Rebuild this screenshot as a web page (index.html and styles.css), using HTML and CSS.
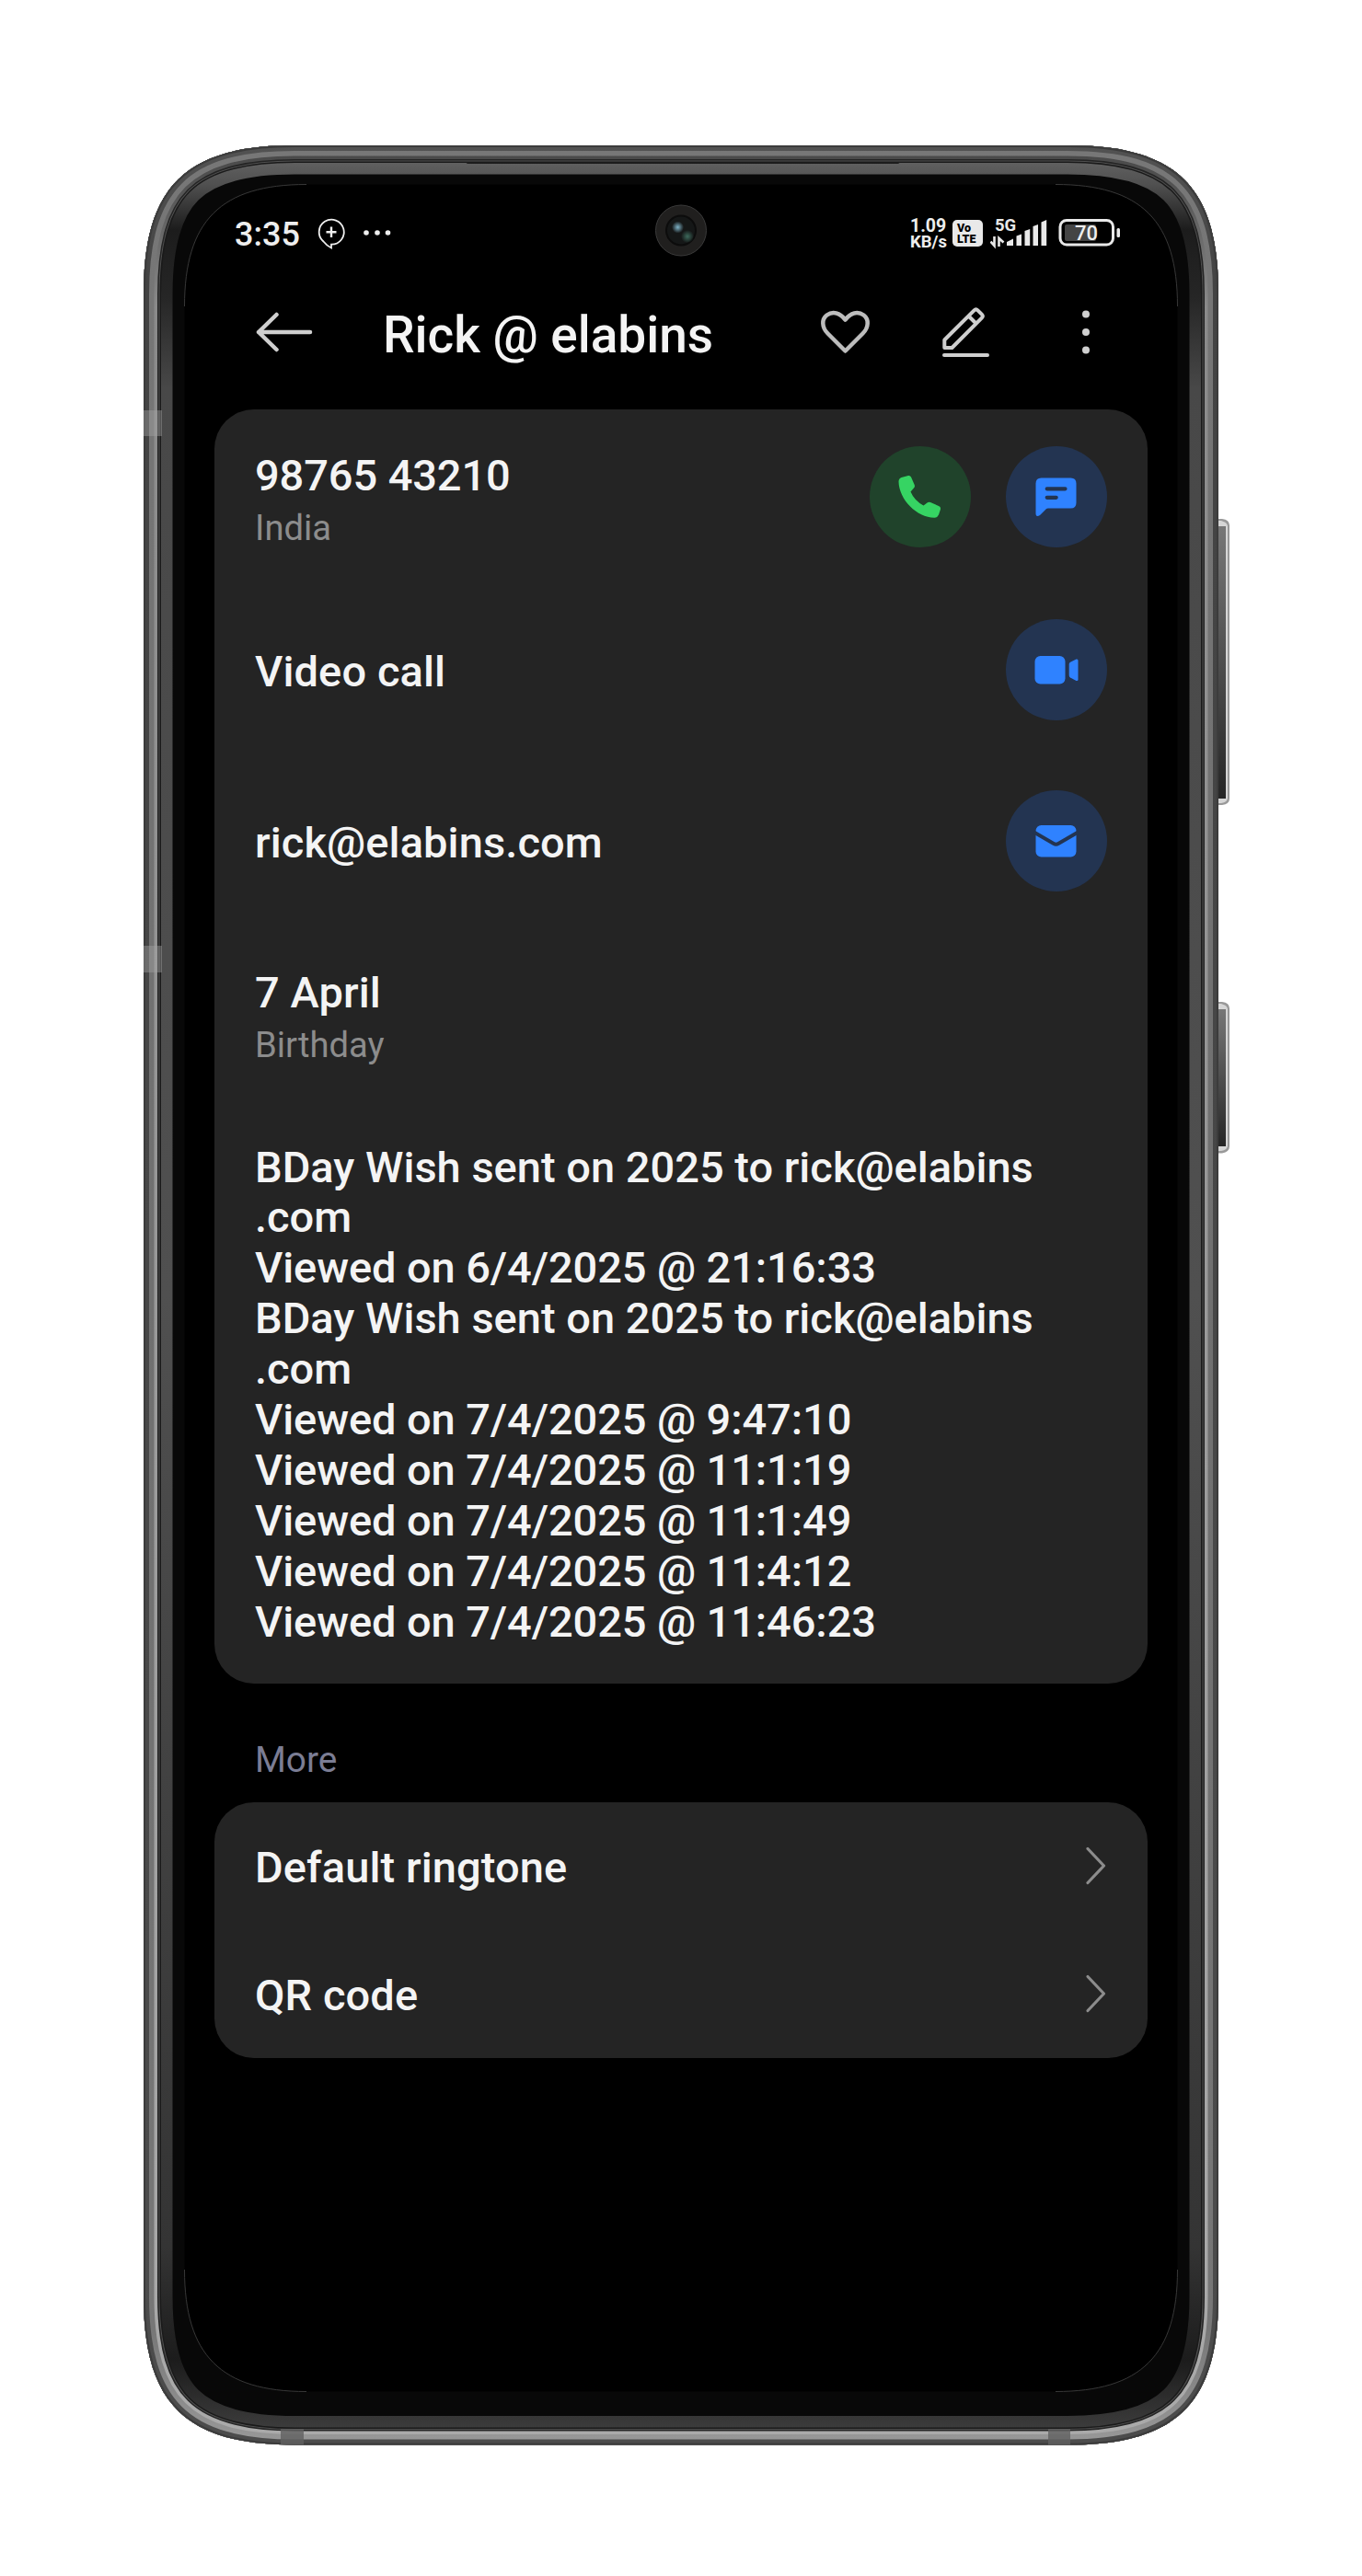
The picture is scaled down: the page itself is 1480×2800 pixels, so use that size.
FILE: index.html
```html
<!DOCTYPE html>
<html lang="en">
<head>
<meta charset="utf-8">
<title>Contact details</title>
<link rel="stylesheet" href="styles.css">
</head>
<body>
<main class="stage">
<div class="phone">
  <svg class="frame" viewBox="156 158 1180 2500" width="1180" height="2500" aria-hidden="true">
    <defs>
      <path id="body" d="M320 158H1160C1279 158 1324 203 1324 320V2496C1324 2612 1279 2657.500 1160 2657.500H320C201 2657.500 156 2612 156 2496V320C156 203 201 158 320 158Z"/>
      <clipPath id="clip"><use href="#body"/></clipPath>
      <linearGradient id="edge" x1="0" y1="158" x2="0" y2="2658" gradientUnits="userSpaceOnUse"><stop offset="0" stop-color="#525252"/><stop offset=".06" stop-color="#434343"/><stop offset="1" stop-color="#4c4c4c"/></linearGradient>
      <linearGradient id="mid" x1="0" y1="158" x2="0" y2="2658" gradientUnits="userSpaceOnUse"><stop offset="0" stop-color="#777"/><stop offset=".5" stop-color="#707070"/><stop offset=".95" stop-color="#777"/><stop offset="1" stop-color="#999"/></linearGradient>
      <linearGradient id="shine" x1="0" y1="158" x2="0" y2="2658" gradientUnits="userSpaceOnUse"><stop offset="0" stop-color="#464646"/><stop offset=".02" stop-color="#555"/><stop offset=".07" stop-color="#8a8a8a"/><stop offset="1" stop-color="#aaa"/></linearGradient>
      <linearGradient id="rim" x1="0" y1="176" x2="0" y2="2640" gradientUnits="userSpaceOnUse"><stop offset="0" stop-color="#606060"/><stop offset=".01" stop-color="#505050"/><stop offset=".03" stop-color="#1c1c1c"/><stop offset=".06" stop-color="#262626"/><stop offset=".1" stop-color="#484848"/><stop offset=".5" stop-color="#505050"/><stop offset=".92" stop-color="#343434"/><stop offset=".97" stop-color="#1c1c1c"/><stop offset="1" stop-color="#3c3c3c"/></linearGradient>
      <linearGradient id="key" x1="0" y1="0" x2="0" y2="1"><stop offset="0" stop-color="#777"/><stop offset="1" stop-color="#262626"/></linearGradient>
      <radialGradient id="hi"><stop offset="0" stop-color="#7fb4c8"/><stop offset="1" stop-color="#7fb4c8" stop-opacity="0"/></radialGradient>
      <radialGradient id="lo"><stop offset="0" stop-color="#3d6a5c"/><stop offset="1" stop-color="#3d6a5c" stop-opacity="0"/></radialGradient>
    </defs>
    <g>
      <path d="M1322 564H1328Q1336 565 1336 571V868Q1336 874 1328 875H1322Z" fill="#999"/>
      <path d="M1322 566H1327Q1334 568 1334 572V867Q1334 872 1327 873H1322Z" fill="#d6d6d6"/>
      <rect x="1322" y="572" width="10" height="296" fill="url(#key)"/>
      <path d="M1322 1089H1328Q1336 1090 1336 1096V1246Q1336 1252 1328 1253.500H1322Z" fill="#999"/>
      <path d="M1322 1091H1327Q1334 1093 1334 1097V1245Q1334 1250 1327 1251H1322Z" fill="#d6d6d6"/>
      <rect x="1322" y="1097" width="10" height="149" fill="url(#key)"/>
    </g>
    <g clip-path="url(#clip)" fill="none">
      <use href="#body" fill="#080808"/>
      <use href="#body" stroke="url(#rim)" stroke-width="63"/>
      <use href="#body" stroke="#1a1a1a" stroke-width="38"/>
      <use href="#body" stroke="#505050" stroke-width="35"/>
      <use href="#body" stroke="#242424" stroke-width="33"/>
      <use href="#body" stroke="url(#shine)" stroke-width="30"/>
      <use href="#body" stroke="url(#mid)" stroke-width="23"/>
      <use href="#body" stroke="url(#edge)" stroke-width="12"/>
      <use href="#body" stroke="#3c3c3c" stroke-width="4"/>
      <path d="M505 176H979L976 178H508Z" fill="#1c1c1c"/>
      <path d="M156 446H176V474H156ZM156 1028H176V1057H156Z" fill="#a8a8a8" opacity=".4"/>
      <path d="M305 2640H330V2658H305ZM1139 2640H1163V2658H1139Z" fill="#606060" opacity=".8"/>
    </g>
    <path d="M333 200.500H1147C1240 200.500 1279.500 240 1279.500 333V2467C1279.500 2560 1240 2599.500 1147 2599.500H333C240 2599.500 200.500 2560 200.500 2467V333C200.500 240 240 200.500 333 200.500Z" fill="#000"/>
    <g fill="none" stroke="#383838" stroke-width="1">
      <path d="M200.500 333C200.500 240 240 200.500 333 200.500M1147 200.500C1240 200.500 1279.500 240 1279.500 333M1279.500 2467C1279.500 2560 1240 2599.500 1147 2599.500M333 2599.500C240 2599.500 200.500 2560 200.500 2467"/>
    </g>
    <circle cx="740" cy="250.500" r="27.500" fill="#201f1e" stroke="#3a3a3a"/>
    <circle cx="740" cy="250.500" r="16" fill="#151717" stroke="#0c0c0c" stroke-width="2"/>
    <circle cx="747" cy="257" r="7" fill="url(#lo)"/>
    <circle cx="736.500" cy="247" r="6.500" fill="url(#hi)"/>
  </svg>

  <div class="screen">
    <header class="status">
      <span class="clock">3:35</span>
      <svg class="chat" width="30" height="34" viewBox="0 0 30 34"><path d="M15 32.500V28.700A13.500 13.500 0 1 0 6.500 25.500Q10.500 30.500 15 32.500Z" fill="none" stroke="#eee" stroke-width="1.800"/><path d="M15 9.500V21M9.500 15.200H20.500" stroke="#eee" stroke-width="2.400"/></svg>
      <svg class="dots" width="30" height="6" viewBox="0 0 30 6" fill="#eee"><circle cx="3" cy="3" r="2.800"/><circle cx="15" cy="3" r="2.800"/><circle cx="26.500" cy="3" r="2.800"/></svg>
      <span class="gap"></span>
      <span class="speed"><span class="rate">1.09</span><br>KB/s</span>
      <span class="volte">Vo<br>LTE</span>
      <svg class="signal" width="62" height="40" viewBox="1076 233 62 40" fill="#e9e9e9"><text class="net" x="1081" y="250.500">5G</text><path d="M1080.500 257V267L1076.500 262.500M1085.500 268V259L1090.500 263.500" fill="none" stroke="#e9e9e9" stroke-width="2.600"/><path d="M1094 267V263L1101 259.500V267ZM1104.500 267V256.500L1110 254.500V267ZM1113.500 267V251L1119.200 249V267ZM1122.500 267V246L1128 244V267ZM1131.500 267V241.500L1137.200 239V267Z"/></svg>
      <svg class="battery" width="68" height="30" viewBox="1150 238 68 30"><rect x="1152" y="239.500" width="57.500" height="26.500" rx="7" fill="none" stroke="#e9e9e9" stroke-width="3"/><rect x="1157" y="244" width="34" height="18" rx="2" fill="#444"/><rect x="1213.500" y="248" width="3.500" height="10" rx="1.500" fill="#e9e9e9"/><text class="level" x="1168" y="261.300">70</text></svg>
    </header>

    <nav class="appbar">
      <svg class="back" width="62" height="46" viewBox="278 337.500 62 46" fill="none" stroke="#cfcfcf" stroke-width="4.500" stroke-linecap="round" stroke-linejoin="round"><path d="M337 360.500H281M300.500 341.500L281 360.500L300.500 379.500"/></svg>
      <h1 class="title">Rick @ elabins</h1>
      <svg class="heart" width="56" height="50" viewBox="890 336 56 50" fill="none" stroke="#bdbdbd" stroke-width="4.500" stroke-linejoin="round"><path d="M918.500 381.500L899.500 362.500C893 356 892.500 347 898.500 342.500C905 338 912.500 340 918.500 347.500C924.500 340 932 338 938.500 342.500C944.500 347 944 356 937.500 362.500Z"/></svg>
      <svg class="pencil" width="54" height="58" viewBox="1023 331 54 58" fill="none" stroke="#cfcfcf" stroke-width="4" stroke-linejoin="round"><path d="M1026.300 377V368.500L1058.500 336.300Q1060.500 334.300 1062.500 336.300L1066.800 340.600Q1068.800 342.600 1066.800 344.600L1034.500 377ZM1052.500 342.500L1060.500 350.500"/><path d="M1026 385H1073" stroke-linecap="round"/></svg>
      <svg class="more-icon" width="10" height="50" viewBox="0 0 10 50" fill="#d0d0d0"><circle cx="5" cy="5.500" r="4"/><circle cx="5" cy="25" r="4"/><circle cx="5" cy="44.500" r="4"/></svg>
    </nav>

    <section class="card details">
      <div class="row phone-row">
        <div class="copy"><div class="primary number">98765 43210</div><div class="secondary">India</div></div>
        <div class="actions">
          <span class="action call"><svg width="110" height="110" viewBox="945 485 110 110"><path d="M979.500 519L987 517Q989 516.500 990 518.500L993.700 527Q994.500 529 993 530.500L989.500 534.500Q993.500 544 1003.500 549.500L1007.500 546.500Q1009 545.200 1011 546L1020 550Q1022.500 551 1022 553.500L1020 559.500Q1018.800 562.500 1015.500 562.700C996 562.500 977 543 976.500 523.500Q976.500 520 979.500 519Z" fill="#36d463"/></svg></span>
          <span class="action"><svg width="110" height="110" viewBox="1092.500 485 110 110"><path d="M1131 519.500H1163Q1169 519.500 1169 525.500V546.500Q1169 552.500 1163 552.500H1138.500Q1137 552.500 1136 553.500L1129.500 560Q1125 562.500 1125 558V525.500Q1125 519.500 1131 519.500Z" fill="#2f82ff"/><path d="M1137.200 531.300H1157M1137.200 540.800H1147.200" stroke="#233451" stroke-width="4.200" stroke-linecap="round"/></svg></span>
        </div>
      </div>
      <div class="row video-row">
        <div class="copy primary">Video call</div>
        <span class="action"><svg width="110" height="110" viewBox="1092.500 673 110 110" fill="#2f82ff"><rect x="1124" y="713" width="33" height="30.500" rx="6"/><path d="M1161.200 722Q1161.200 720.500 1162.500 719.700L1169 716.500Q1171 716 1171 718V738.500Q1171 740.500 1169 740L1162.500 736.500Q1161.200 735.700 1161.200 734Z"/></svg></span>
      </div>
      <div class="row mail-row">
        <div class="copy primary">rick@elabins.com</div>
        <span class="action"><svg width="110" height="110" viewBox="1092.500 859 110 110"><rect x="1125" y="897" width="44" height="34.500" rx="6" fill="#2f82ff"/><path d="M1123 904.500L1144.500 917Q1147 918.500 1149.500 917L1171 904.500" fill="none" stroke="#233451" stroke-width="3.800"/></svg></span>
      </div>
      <div class="row birthday-row">
        <div class="copy"><div class="primary">7 April</div><div class="secondary">Birthday</div></div>
      </div>
      <div class="notes primary">BDay Wish sent on 2025 to rick@elabins<br>.com<br><span class="viewed">Viewed on 6/4/2025 @ 21:16:33</span><br>BDay Wish sent on 2025 to rick@elabins<br>.com<br><span class="viewed">Viewed on 7/4/2025 @ 9:47:10<br>Viewed on 7/4/2025 @ 11:1:19<br>Viewed on 7/4/2025 @ 11:1:49<br>Viewed on 7/4/2025 @ 11:4:12<br>Viewed on 7/4/2025 @ 11:46:23</span></div>
    </section>

    <h2 class="section-label">More</h2>
    <section class="card settings">
      <div class="setting"><span class="primary">Default ringtone</span><svg width="24" height="42" viewBox="0 0 24 42"><path d="M3 2.500L20.500 21L3 39.500"/></svg></div>
      <div class="setting"><span class="primary">QR code</span><svg width="24" height="42" viewBox="0 0 24 42"><path d="M3 2.500L20.500 21L3 39.500"/></svg></div>
    </section>
  </div>
</div>
</main>
</body>
</html>
```
FILE: styles.css
```css
*{box-sizing:border-box}
body{margin:0;background:#fff;font-family:Roboto,"Liberation Sans",sans-serif}
svg{display:block;flex:none}
.stage{height:2800px;padding:158px 144px 142px 156px}
.phone{position:relative;width:1180px;height:2500px;padding:42px 56px 58px 44px}
.frame{position:absolute;left:0;top:0}
.screen{position:relative;width:1080px;height:2400px;padding:0 33.500px 0 33px;display:flex;flex-direction:column}
.status{height:106px;display:flex;align-items:center;padding:0 28.500px 0 22px;color:#eee}
.clock{width:90px;padding-top:3px;font-size:36px;font-weight:500;line-height:40px}
.chat{margin-top:1px}
.dots{margin-left:20px}
.gap{flex:1}
.speed{width:46px;padding-top:3px;font-size:18.500px;font-weight:700;line-height:17.500px;white-space:nowrap}
.rate{font-size:19.500px}
.volte{width:33px;height:29px;border-radius:5px;background:#e9e9e9;color:#000;font-size:12.500px;font-weight:900;line-height:12px;padding:3px 0 0 5px;margin-right:8px}
.net{font-size:18.500px;font-weight:700}
.battery{margin-left:12px}
.level{font-size:22px;font-weight:500;fill:#eee}
.appbar{height:109px;display:flex;align-items:center;padding:0 61.500px 0 45px}
.title{flex:1;margin:7px 0 0 76px;font-size:55px;line-height:64px;font-weight:500;letter-spacing:-.050px;color:#f4f4f4;white-space:nowrap}
.pencil{margin-left:77px}
.more-icon{margin-left:98px}
.card{background:#242424;border-radius:43px}
.details{margin-top:30px;height:1385px;padding:0 44px}
.row{display:flex;justify-content:space-between;align-items:center}
.phone-row{height:189px}
.video-row{height:188px}
.mail-row{height:184px}
.birthday-row{height:235.500px;align-items:flex-start;padding-top:45px}
.primary{font-size:47px;line-height:56px;font-weight:500;letter-spacing:.1px;color:#f4f4f4;white-space:nowrap}
.primary.number,.viewed{letter-spacing:-.1px}
.secondary{font-size:38.200px;line-height:50px;margin-top:4px;color:#8c8c8c}
.phone-row .copy{padding-top:9px}
.video-row .copy{padding-top:4px}
.mail-row .copy{padding-top:3px}
.actions{display:flex;gap:38px}
.action{width:110px;height:110px;border-radius:50%;background:#233451}
.call{background:#20432b}
.notes{line-height:54.900px;letter-spacing:0}
.section-label{margin:58px 0 0 44px;height:70.500px;font-size:38.800px;line-height:50px;font-weight:400;color:#7b7d94}
.settings{height:278px;padding:0 44px}
.setting{height:139px;display:flex;align-items:center;justify-content:space-between}
.setting .primary{padding-top:3px}
.setting path{fill:none;stroke:#8c8c8c;stroke-width:3.200;stroke-linecap:round;stroke-linejoin:round}
```
